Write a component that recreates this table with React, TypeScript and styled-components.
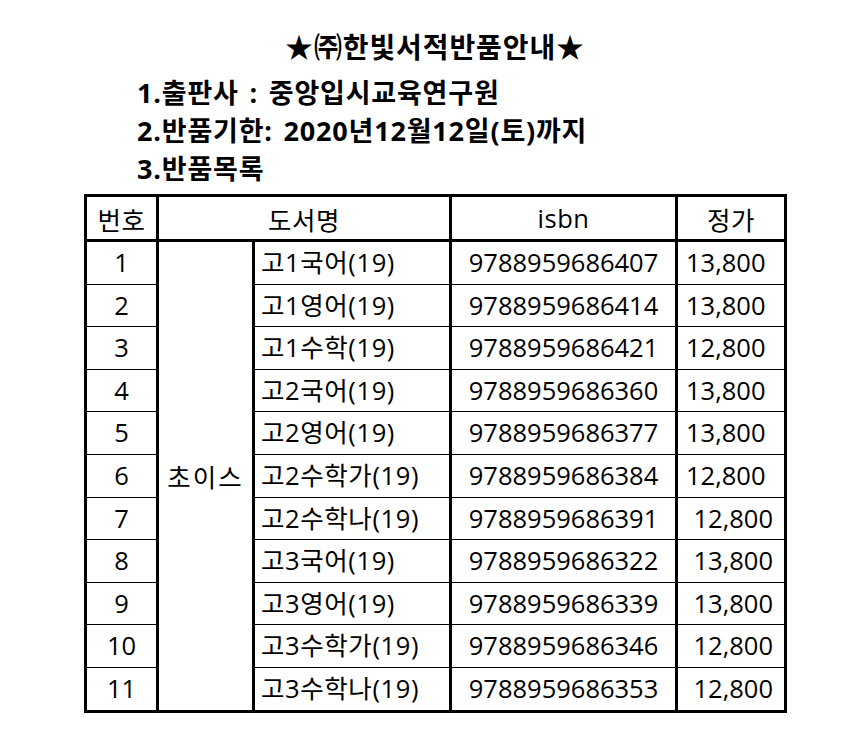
import React from 'react';
import styled, { createGlobalStyle } from 'styled-components';

const GlobalStyle = createGlobalStyle`
  body {
    margin: 0;
    background: #ffffff;
    color: #000000;
    font-family: "Open Sans", "Noto Sans CJK KR", sans-serif;
  }
`;

const Page = styled.div`
  width: 700px;
  margin-left: 84px;
  padding-top: 27px;
`;

const Title = styled.h1`
  margin: 0;
  text-align: center;
  font-size: 28px;
  font-weight: 700;
  line-height: 38px;
  padding-left: 2px;
  letter-spacing: 0.9px;
  font-family: "Noto Sans CJK KR", sans-serif;
`;

const InfoList = styled.ol`
  list-style: none;
  margin: 9px 0 0;
  padding: 0 0 0 53px;
`;

const InfoItem = styled.li`
  font-size: 27px;
  font-weight: 700;
  line-height: 38px;
  letter-spacing: 0.8px;
  word-spacing: 3px;
  font-family: "Open Sans", "Noto Sans CJK KR", sans-serif;
`;

const Table = styled.table`
  margin-top: 6px;
  width: 700px;
  border-collapse: collapse;
  border: 3px solid #000;
  table-layout: fixed;
  font-size: 25.5px;
`;

const HeadCell = styled.th`
  font-weight: 400;
  height: 42px;
  padding: 0;
  text-align: center;
  border-left: 3px solid #000;
  border-right: 3px solid #000;
  border-bottom: 3px solid #000;
  letter-spacing: 0.5px;
  font-family: "Open Sans", "Noto Sans CJK KR", sans-serif;
`;

const Cell = styled.td<{ $align?: 'left' | 'center' | 'right'; $pad?: number; $spacing?: number }>`
  height: 41.6px;
  padding: 0 ${(p) => p.$pad ?? 0}px;
  text-align: ${(p) => p.$align ?? 'center'};
  letter-spacing: ${(p) => p.$spacing ?? 0}px;
  border-left: 3px solid #000;
  border-right: 3px solid #000;
  border-bottom: 1px solid #000;
  white-space: nowrap;
  line-height: 1;
`;

const SeriesCell = styled.td`
  padding: 0;
  text-align: center;
  vertical-align: middle;
  border-left: 3px solid #000;
  border-right: 3px solid #000;
  letter-spacing: 2px;
`;

type Book = { title: string; isbn: string; price: string };

const books: Book[] = [
  { title: '고1국어(19)', isbn: '9788959686407', price: '13,800' },
  { title: '고1영어(19)', isbn: '9788959686414', price: '13,800' },
  { title: '고1수학(19)', isbn: '9788959686421', price: '12,800' },
  { title: '고2국어(19)', isbn: '9788959686360', price: '13,800' },
  { title: '고2영어(19)', isbn: '9788959686377', price: '13,800' },
  { title: '고2수학가(19)', isbn: '9788959686384', price: '12,800' },
  { title: '고2수학나(19)', isbn: '9788959686391', price: '12,800' },
  { title: '고3국어(19)', isbn: '9788959686322', price: '13,800' },
  { title: '고3영어(19)', isbn: '9788959686339', price: '13,800' },
  { title: '고3수학가(19)', isbn: '9788959686346', price: '12,800' },
  { title: '고3수학나(19)', isbn: '9788959686353', price: '12,800' },
];

const App = () => {
  return (
    <Page>
      <GlobalStyle />
      <Title>★㈜한빛서적반품안내★</Title>
      <InfoList>
        <InfoItem>1.출판사 : 중앙입시교육연구원</InfoItem>
        <InfoItem>2.반품기한: 2020년12월12일(토)까지</InfoItem>
        <InfoItem>3.반품목록</InfoItem>
      </InfoList>
      <Table>
        <colgroup>
          <col style={{ width: 72 }} />
          <col style={{ width: 96 }} />
          <col style={{ width: 197 }} />
          <col style={{ width: 226 }} />
          <col style={{ width: 109 }} />
        </colgroup>
        <thead>
          <tr>
            <HeadCell>번호</HeadCell>
            <HeadCell colSpan={2}>도서명</HeadCell>
            <HeadCell>isbn</HeadCell>
            <HeadCell>정가</HeadCell>
          </tr>
        </thead>
        <tbody>
          {books.map((b, i) => (
            <tr key={b.isbn}>
              <Cell>{i + 1}</Cell>
              {i === 0 && <SeriesCell rowSpan={books.length}>초이스</SeriesCell>}
              <Cell $align="left" $pad={6} $spacing={0.6}>
                {b.title}
              </Cell>
              <Cell>{b.isbn}</Cell>
              {i < 6 ? (
                <Cell $align="left" $pad={8}>
                  {b.price}
                </Cell>
              ) : (
                <Cell $align="right" $pad={11}>
                  {b.price}
                </Cell>
              )}
            </tr>
          ))}
        </tbody>
      </Table>
    </Page>
  );
};

export default App;
